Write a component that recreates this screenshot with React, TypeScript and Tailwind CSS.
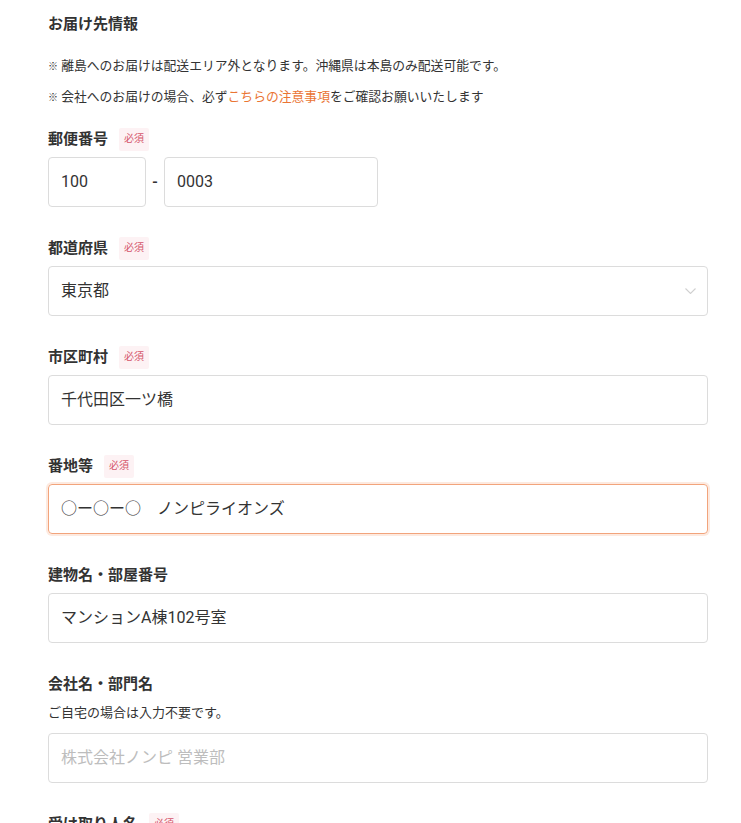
import type { ReactNode } from "react"

const FONT = { fontFamily: 'Roboto, "Noto Sans CJK JP", sans-serif' }

function Required() {
  return (
    <span className="flex h-[23px] items-center rounded-[2px] bg-[#fdf2f4] px-[5px] text-[10px] leading-none text-[#d5566c]">
      必須
    </span>
  )
}

function Label({ children, required }: { children: ReactNode; required?: boolean }) {
  return (
    <div className="flex h-[22px] items-center gap-[11px]">
      <span className="text-[15px] font-bold leading-[22px] text-[#333]">{children}</span>
      {required && <Required />}
    </div>
  )
}

function TextBox({ value, placeholder, focused, className = "" }: { value?: string; placeholder?: string; focused?: boolean; className?: string }) {
  return (
    <div
      className={
        "flex h-[50px] items-center rounded-[4px] border px-3 text-base " +
        (focused
          ? "border-[#f2a47c] shadow-[0_0_0_2px_rgba(246,160,115,0.22)] "
          : "border-[#dcdcdc] ") +
        className
      }
    >
      {value ? (
        <span className="whitespace-pre text-[#333]">{value}</span>
      ) : (
        <span className="text-[#bdbdbd]">{placeholder}</span>
      )}
    </div>
  )
}

export default function App() {
  return (
    <div className="min-h-screen bg-white pl-12 pr-[33px] pt-[13px] text-[#333]" style={FONT}>
      {/* ── 見出し ─────────────────────────── */}
      <h2 className="text-[15px] font-bold leading-[22px]">お届け先情報</h2>
      <p className="mt-[21px] text-[12.8px] leading-5">
        <span className="text-[10px]">※</span> 離島へのお届けは配送エリア外となります。沖縄県は本島のみ配送可能です。
      </p>
      <p className="mt-[10px] text-[12.8px] leading-5">
        <span className="text-[10px]">※</span> 会社へのお届けの場合、必ず
        <span className="text-[#ea7534]">こちらの注意事項</span>をご確認お願いいたします
      </p>

      {/* ── フォーム ─────────────────────────── */}
      <div className="mt-[20px] flex flex-col gap-[30px]">
        <div>
          <Label required>郵便番号</Label>
          <div className="mt-[7px] flex items-center">
            <TextBox value="100" className="w-[98px]" />
            <span className="w-[18px] text-center text-base font-medium">-</span>
            <TextBox value="0003" className="w-[214px]" />
          </div>
        </div>

        <div>
          <Label required>都道府県</Label>
          <div className="mt-[7px] flex h-[50px] items-center justify-between rounded-[4px] border border-[#dcdcdc] pl-3 pr-[11px] text-base">
            <span>東京都</span>
            <svg width="11" height="6" viewBox="0 0 11 6" fill="none" stroke="#d0d0d0" strokeWidth="1.1">
              <path d="M0.5 0.5l5 5 5-5" />
            </svg>
          </div>
        </div>

        <div>
          <Label required>市区町村</Label>
          <TextBox value="千代田区一ツ橋" className="mt-[7px]" />
        </div>

        <div>
          <Label required>番地等</Label>
          <TextBox value="○ー○ー○　ノンピライオンズ" focused className="mt-[7px]" />
        </div>

        <div>
          <Label>建物名・部屋番号</Label>
          <TextBox value="マンションA棟102号室" className="mt-[7px]" />
        </div>

        <div>
          <Label>会社名・部門名</Label>
          <p className="mt-2 text-[13px] leading-5">ご自宅の場合は入力不要です。</p>
          <TextBox placeholder="株式会社ノンピ 営業部" className="mt-[10px]" />
        </div>

        <div>
          <Label required>受け取り人名</Label>
          <TextBox className="mt-[7px]" />
        </div>
      </div>
    </div>
  )
}
